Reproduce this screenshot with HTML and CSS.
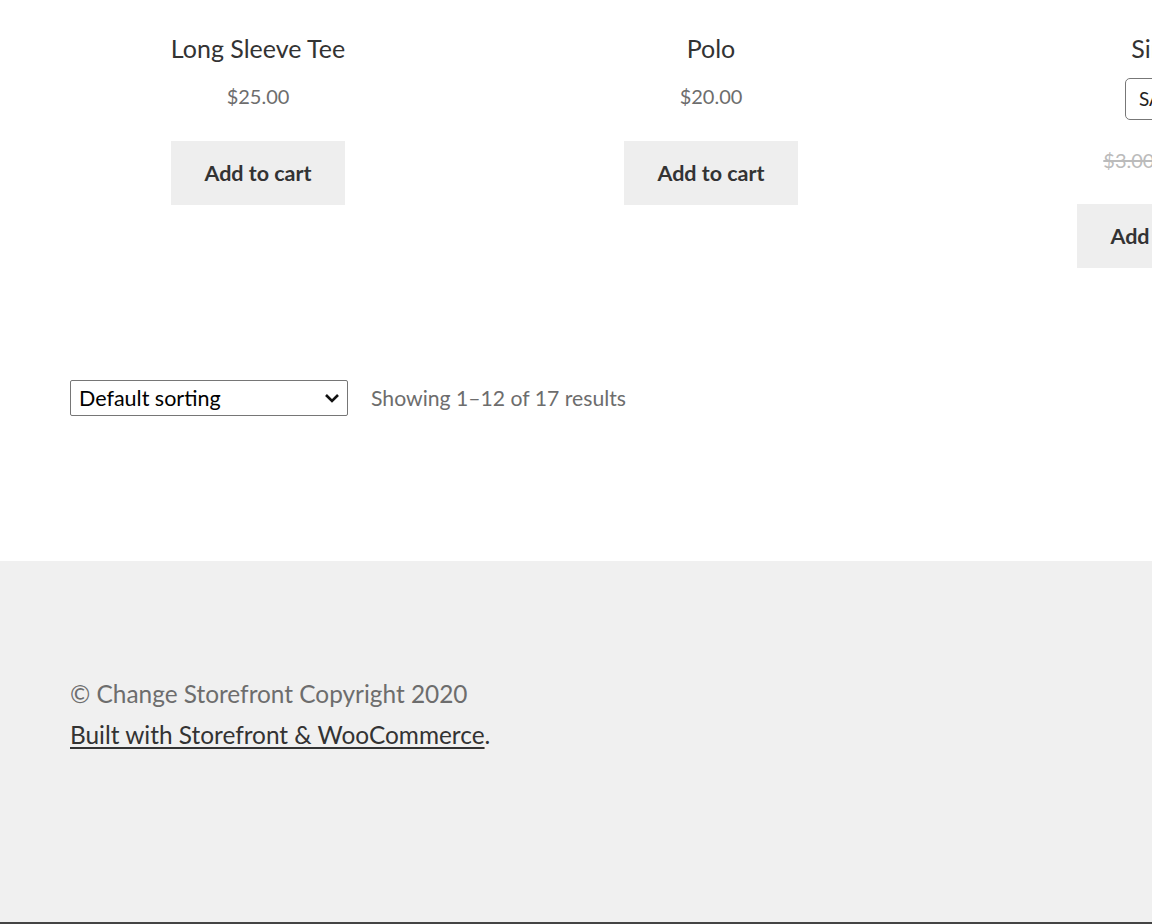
FILE: index.html
```html
<!DOCTYPE html>
<html lang="en">
<head>
<meta charset="utf-8">
<title>Shop</title>
<link rel="stylesheet" href="styles.css">
</head>
<body>
<div class="page">
  <main class="content">
    <ul class="products">
      <li class="product">
        <h2 class="title">Long Sleeve Tee</h2>
        <span class="price">$25.00</span>
        <a class="button" href="#">Add to cart</a>
      </li>
      <li class="product">
        <h2 class="title">Polo</h2>
        <span class="price">$20.00</span>
        <a class="button" href="#">Add to cart</a>
      </li>
      <li class="product">
        <h2 class="title">Single</h2>
        <div class="variant"><span class="variant-box">SALE</span></div>
        <span class="price sale"><del>$3.00</del> <ins>$2.00</ins></span>
        <a class="button" href="#">Add to cart</a>
      </li>
    </ul>
    <div class="toolbar">
      <div class="sort">
        <span class="sort-label">Default sorting</span>
        <svg class="chev" width="16" height="12" viewBox="0 0 16 12"><path d="M2 3 L8 9 L14 3" fill="none" stroke="#111" stroke-width="2.6"/></svg>
      </div>
      <p class="count">Showing 1–12 of 17 results</p>
    </div>
  </main>
  <footer class="footer">
    <p class="copy">© Change Storefront Copyright 2020</p>
    <p class="built"><a href="#">Built with Storefront &amp; WooCommerce</a>.</p>
  </footer>
  <div class="handheld"></div>
</div>
</body>
</html>
```
FILE: styles.css
```css
* { box-sizing: border-box; }
html, body { margin: 0; padding: 0; }
body {
  width: 1152px;
  height: 924px;
  overflow: hidden;
  background: #fff;
  font-family: Lato, "Liberation Sans", sans-serif;
  color: #333;
}
.page {
  display: flex;
  flex-direction: column;
  height: 924px;
}
.content {
  height: 561px;
  padding: 0 0 0 70px;
}
.products {
  list-style: none;
  margin: 0;
  padding: 0;
  display: flex;
  gap: 77px;
  width: 1300px;
}
.product {
  width: 376px;
  flex: none;
  text-align: center;
  display: flex;
  flex-direction: column;
  align-items: center;
}
.title {
  margin: 32px 0 0;
  font-weight: 400;
  font-size: 25px;
  line-height: 32px;
  color: #333;
}
.price {
  margin-top: 19px;
  font-size: 20px;
  line-height: 26px;
  color: #6d6d6d;
}
.price.sale {
  margin-top: 27px;
  white-space: nowrap;
}
.price.sale del { color: #bbb; }
.price.sale ins { text-decoration: none; font-weight: 700; color: #6d6d6d; margin-left: 14px; }
.variant {
  margin-top: 14px;
  display: flex;
  justify-content: center;
  width: 100%;
}
.variant-box {
  width: 78px;
  height: 42px;
  border: 1px solid #777;
  border-radius: 5px;
  font-size: 19px;
  line-height: 40px;
  text-align: left;
  padding-left: 13px;
  color: #222;
}
.button {
  margin-top: 32px;
  width: 174px;
  height: 64px;
  background: #eeeeee;
  color: #333;
  font-weight: 700;
  font-size: 21.5px;
  line-height: 64px;
  text-decoration: none;
}
.product:nth-child(3) .button { margin-top: 31px; }
.toolbar {
  margin-top: 112px;
  display: flex;
  align-items: center;
  gap: 23px;
}
.sort {
  width: 278px;
  height: 36px;
  border: 1px solid #767676;
  border-radius: 2px;
  display: flex;
  align-items: center;
  justify-content: space-between;
  padding: 0 7px 0 8px;
  color: #000;
  font-size: 21.5px;
}
.count {
  margin: 0;
  font-size: 21.2px;
  color: #6d6d6d;
}
.footer {
  flex: 1;
  background: #f0f0f0;
  padding: 112px 0 0 70px;
}
.footer p {
  margin: 0;
  font-size: 24.4px;
  line-height: 41px;
  color: #6d6d6d;
}
.footer .built, .footer .built a { color: #333; }
.footer a { text-decoration: underline; text-underline-offset: 3px; }
.handheld {
  height: 2px;
  background: #444;
}
```
